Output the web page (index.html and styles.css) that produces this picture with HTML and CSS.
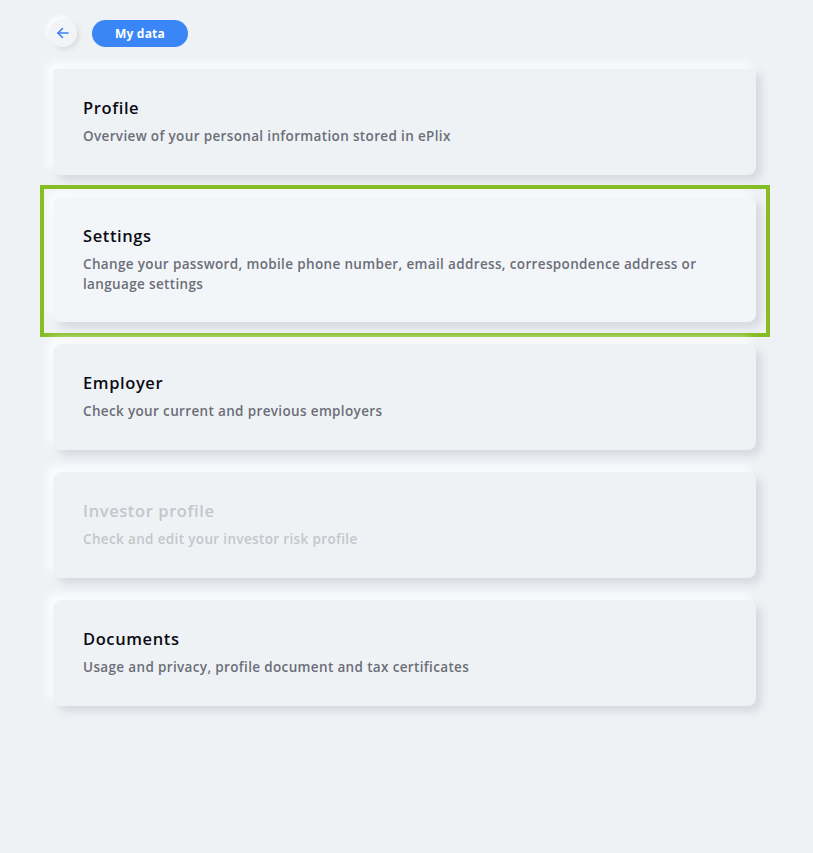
FILE: index.html
```html
<!DOCTYPE html>
<html lang="en">
<head>
    <meta charset="UTF-8">
    <meta name="viewport" content="width=device-width, initial-scale=1.0">
    <title>My data</title>
    <link rel="stylesheet" href="styles.css">
</head>
<body>
    <div class="page">
        <div class="top-bar">
            <a href="#" class="back-btn">
                <svg width="14" height="14" viewBox="0 0 14 14" fill="none" stroke="#3b82f6" stroke-width="1.6" stroke-linecap="round" stroke-linejoin="round">
                    <path d="M12 7H2"/>
                    <path d="M6.5 2.5L2 7l4.5 4.5"/>
                </svg>
            </a>
            <span class="pill">My data</span>
        </div>

        <div class="card-list">
            <div class="card card-first">
                <div class="card-title">Profile</div>
                <div class="card-text">Overview of your personal information stored in ePlix</div>
            </div>
            <div class="card card-selected">
                <div class="card-title">Settings</div>
                <div class="card-text">Change your password, mobile phone number, email address, correspondence address or language settings</div>
            </div>
            <div class="card">
                <div class="card-title">Employer</div>
                <div class="card-text">Check your current and previous employers</div>
            </div>
            <div class="card card-disabled">
                <div class="card-title">Investor profile</div>
                <div class="card-text">Check and edit your investor risk profile</div>
            </div>
            <div class="card">
                <div class="card-title">Documents</div>
                <div class="card-text">Usage and privacy, profile document and tax certificates</div>
            </div>
        </div>
    </div>
</body>
</html>
```

FILE: styles.css
```css
body {
    margin: 0;
    background-color: #eff2f5;
    font-family: "Open Sans", "Noto Sans", sans-serif;
    color: #0b0b14;
    height: 100vh;
}
.page {
    padding: 19px 57px 0 53px;
}
.top-bar {
    display: flex;
    align-items: center;
    gap: 15px;
    height: 28px;
    margin-left: -4px;
}
.back-btn {
    width: 28px;
    height: 28px;
    border-radius: 50%;
    background-color: #f2f4f7;
    box-shadow: 2px 2px 5px rgba(0, 0, 0, 0.10), -2px -2px 5px #fff;
    display: flex;
    align-items: center;
    justify-content: center;
}
.pill {
    background-color: #3b86f7;
    color: #fff;
    font-weight: bold;
    font-size: 12px;
    letter-spacing: 0.2px;
    height: 27px;
    line-height: 27px;
    padding: 0 23px;
    border-radius: 14px;
}
.card-list {
    display: flex;
    flex-direction: column;
    gap: 22px;
    margin-top: 22px;
}
.card {
    position: relative;
    background-color: #eff2f5;
    border-radius: 8px;
    padding: 27px 30px 29px 30px;
    box-shadow: 5px 5px 10px rgba(30, 40, 70, 0.13), -5px -5px 10px rgba(255, 255, 255, 0.9);
}
.card-first {
    border-top-left-radius: 0;
    border-top-right-radius: 0;
}
.card-title {
    font-size: 16.5px;
    font-weight: 600;
    letter-spacing: 0.6px;
    line-height: 24px;
    margin-bottom: 6px;
}
.card-text {
    font-size: 13.5px;
    font-weight: 600;
    letter-spacing: 0.35px;
    line-height: 20px;
    color: #6b6e78;
}
.card-selected {
    background-color: #f3f6f9;
    padding-bottom: 28px;
}
.card-selected::after {
    content: "";
    position: absolute;
    top: -12px;
    left: -13px;
    right: -14px;
    bottom: -15px;
    border: 4px solid #85bd22;
    pointer-events: none;
}
.card-disabled .card-title,
.card-disabled .card-text {
    color: #c4c6cb;
}
```
